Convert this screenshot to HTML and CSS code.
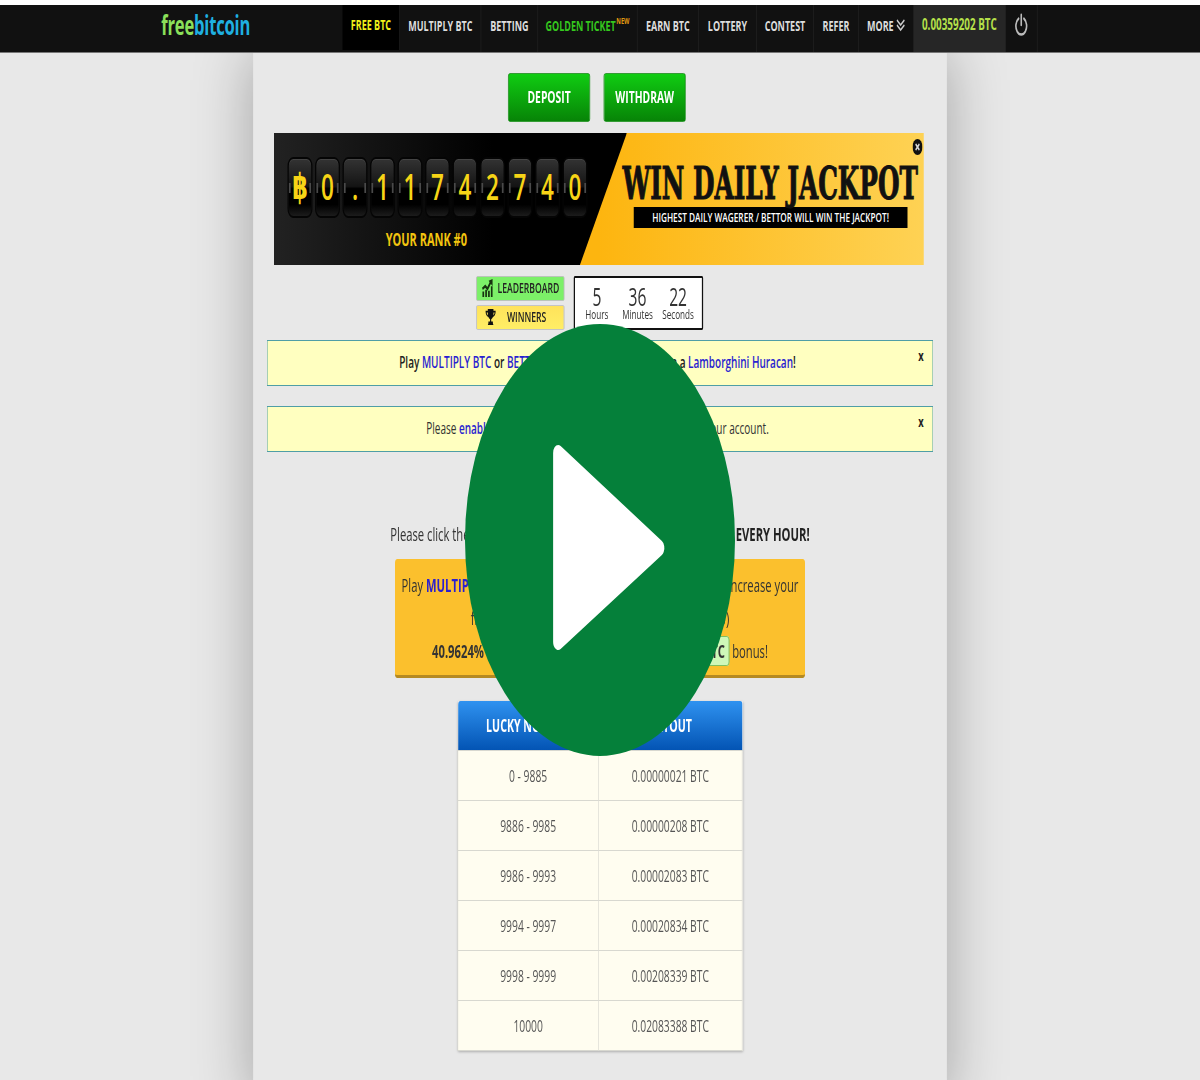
FILE: index.html
```html
<!DOCTYPE html>
<html lang="en">
<head>
<meta charset="UTF-8" />
<title>Free Bitcoin</title>
<link rel="stylesheet" href="styles.css">
</head>
<body>
<div class="frame">
<div class="page">
  <nav class="topbar">
    <a class="logo"><span class="logo-free">free</span><span class="logo-bit">bitcoin</span></a>
    <ul class="menu">
      <li class="menu-item active" style="width:92px">FREE BTC</li>
      <li class="menu-item" style="width:130px">MULTIPLY BTC</li>
      <li class="menu-item" style="width:91px">BETTING</li>
      <li class="menu-item golden" style="width:159px">GOLDEN TICKET<sup class="new">NEW</sup></li>
      <li class="menu-item" style="width:98px">EARN BTC</li>
      <li class="menu-item" style="width:93px">LOTTERY</li>
      <li class="menu-item" style="width:91px">CONTEST</li>
      <li class="menu-item" style="width:72px">REFER</li>
      <li class="menu-item" style="width:88px">MORE
        <svg class="chevrons" viewBox="0 0 14 14"><path d="M1 2l6 5 6-5M1 7l6 5 6-5" fill="none" stroke="#ccc" stroke-width="2"/></svg>
      </li>
      <li class="menu-item balance" style="width:147px">0.00359202 BTC</li>
      <li class="menu-item" style="width:51px">
        <svg class="power" viewBox="0 0 24 28"><path d="M7 6.500a10 10 0 1 0 10 0M12 2v12" fill="none" stroke="#bbb" stroke-width="3" stroke-linecap="round"/></svg>
      </li>
    </ul>
  </nav>

  <main class="content">
    <div class="actions">
      <a class="btn-green">DEPOSIT</a>
      <a class="btn-green">WITHDRAW</a>
    </div>

    <section class="jackpot">
      <div class="jackpot-left">
        <div class="flips">
          <span class="flip baht">฿</span><span class="flip">0</span><span class="flip">.</span><span class="flip">1</span><span class="flip">1</span><span class="flip">7</span><span class="flip">4</span><span class="flip">2</span><span class="flip">7</span><span class="flip">4</span><span class="flip">0</span>
        </div>
        <div class="rank">YOUR RANK #0</div>
      </div>
      <div class="jackpot-right">
        <div class="jackpot-title">WIN DAILY JACKPOT</div>
        <div class="jackpot-sub">HIGHEST DAILY WAGERER / BETTOR WILL WIN THE JACKPOT!</div>
      </div>
      <svg class="jackpot-close" viewBox="0 0 16 16"><circle cx="8" cy="8" r="8" fill="#111"/><path d="M5 5l6 6M11 5l-6 6" stroke="#ddd" stroke-width="2"/></svg>
    </section>

    <div class="board">
      <div class="board-links">
        <a class="board-btn green">
          <svg class="board-icon" viewBox="0 0 20 20"><path d="M1 20v-6h3v6zM6 20v-8h3v8zM11 20v-7h3v7zM16 20V8h3v12z" fill="#17330f"/><path d="M1 11l5-3 4 3 6-8" fill="none" stroke="#17330f" stroke-width="3"/><path d="M12 2l7-2v8z" fill="#17330f"/></svg>
          LEADERBOARD
        </a>
        <a class="board-btn yellow">
          <svg class="board-icon" viewBox="0 0 20 20"><path d="M5 1h10v2h4c0 4-2 6-5 7-.6 1-1.500 2-3 2.500V15h3v2l1 2H5l1-2v-2h3v-2.500C7.500 12 6.600 11 6 10 3 9 1 7 1 3h4zM3 5c.3 1.500 1 2.500 2.300 3.200C5.100 7.200 5 6 5 5zm14 0h-2c0 1-.1 2.200-.3 3.200C16 7.500 16.700 6.500 17 5z" fill="#111"/></svg>
          WINNERS
        </a>
      </div>
      <div class="countdown">
        <div class="count"><b>5</b><span>Hours</span></div>
        <div class="count"><b>36</b><span>Minutes</span></div>
        <div class="count"><b>22</b><span>Seconds</span></div>
      </div>
    </div>

    <div class="notice strong">
      Play <a>MULTIPLY BTC</a> or <a>BETTING</a> games for a chance to win a <a>Lamborghini Huracan</a>!
      <span class="notice-x">x</span>
    </div>
    <div class="notice">
      Please <a class="semi">enable two factor authentication</a> for the security of your account.
      <span class="notice-x">x</span>
    </div>

    <p class="intro">Please click the big ROLL! button below to win lots of free bitcoins <b>EVERY HOUR!</b></p>

    <div class="bonus">
      <p>Play <a>MULTIPLY BTC</a> or <a>BETTING</a> to earn reward points and to increase your</p>
      <p>free bitcoin bonus (see the rewards page for info)</p>
      <p><b>40.9624%</b> of your next win is paid as a <span class="pill">0.00000021 BTC</span> bonus!</p>
    </div>

    <table class="payouts">
      <thead>
        <tr><th class="col-lucky">LUCKY NUMBER</th><th>PAYOUT</th></tr>
      </thead>
      <tbody>
        <tr><td>0 - 9885</td><td>0.00000021 BTC</td></tr>
        <tr><td>9886 - 9985</td><td>0.00000208 BTC</td></tr>
        <tr><td>9986 - 9993</td><td>0.00002083 BTC</td></tr>
        <tr><td>9994 - 9997</td><td>0.00020834 BTC</td></tr>
        <tr><td>9998 - 9999</td><td>0.00208339 BTC</td></tr>
        <tr><td>10000</td><td>0.02083388 BTC</td></tr>
      </tbody>
    </table>
  </main>

  <svg class="play" viewBox="0 0 432 432">
    <circle cx="216" cy="216" r="216" fill="#05803a"/>
    <path d="M149 129 L311 224 L149 318 Z" fill="#fff" stroke="#fff" stroke-width="16" stroke-linejoin="round"/>
  </svg>
</div>
</div>
</body>
</html>
```

FILE: styles.css
```css
html, body {
  margin: 0;
  height: 1080px;
  overflow: hidden;
  background: #e8e8e8;
}
.frame {
  width: 1200px;
  height: 1080px;
  overflow: hidden;
}
/* the shot is a 1920 wide page squeezed to 1200 */
.page {
  position: relative;
  width: 1920px;
  height: 1080px;
  transform: scaleX(0.625);
  transform-origin: 0 0;
  font-family: "Open Sans", sans-serif;
  font-size: 16px;
  color: #333;
  overflow: hidden;
}
a { color: #2a1fd0; }

/* Top bar */
.topbar {
  position: relative;
  z-index: 2;
  display: flex;
  align-items: stretch;
  height: 47px;
  border-top: 5px solid #fff;
  border-bottom: 1px solid #777;
  background: #111;
}
.logo {
  display: block;
  width: 290px;
  margin-left: 258px;
  font-size: 26.500px;
  font-weight: 700;
  line-height: 40px;
  letter-spacing: -0.3px;
}
.logo-free { color: #8be05a; }
.logo-bit { color: #1fb0e0; }
.menu {
  display: flex;
  margin: 0;
  padding: 0;
  list-style: none;
}
.menu-item {
  display: flex;
  align-items: center;
  justify-content: center;
  gap: 4px;
  box-sizing: border-box;
  border-right: 1px solid #242424;
  font-size: 14.400px;
  font-weight: 700;
  color: #ddd;
  white-space: nowrap;
  padding-bottom: 7px;
}
.menu-item.active {
  background: #000;
  color: #f2f21a;
  margin-bottom: 2px;
}
.menu-item.golden { color: #35c81e; }
.menu-item.balance {
  background: #262626;
  color: #b5e04a;
  font-size: 15.800px;
  padding-bottom: 9px;
}
.new {
  align-self: flex-start;
  margin: 9px 0 0 -3px;
  font-size: 9px;
  color: #e09a10;
}
.chevrons { width: 14px; height: 14px; }
.power { width: 22px; height: 24px; }

/* Column */
.content {
  width: 1110px;
  height: 1030px;
  margin: 0 auto;
  padding-top: 20px;
  background: #e8e8e8;
  box-shadow: 0 0 70px rgba(0, 0, 0, 0.3);
}
.actions {
  display: flex;
  justify-content: center;
  gap: 22px;
  padding-right: 10px;
}
.btn-green {
  width: 129px;
  height: 47px;
  border: 1px solid #0a8a0a;
  border-radius: 3px;
  background: linear-gradient(#10cc12, #078407);
  color: #fff;
  font-size: 16.500px;
  font-weight: 700;
  line-height: 45px;
  text-align: center;
}

/* Jackpot banner */
.jackpot {
  position: relative;
  display: flex;
  width: 1040px;
  height: 132px;
  margin: 11px 0 0 33px;
  background: linear-gradient(90deg, #fdb50f 50%, #fed254 100%);
}
.jackpot-left {
  flex: none;
  width: 565px;
  padding: 24px 0 0 22px;
  box-sizing: border-box;
  background: linear-gradient(90deg, #222, #000 62%);
  clip-path: polygon(0 0, 100% 0, 86.700% 100%, 0 100%);
}
.flips {
  display: flex;
  gap: 4px;
}
/* notches at mid height, then the card face */
.flip {
  flex: none;
  width: 40px;
  height: 61px;
  box-sizing: border-box;
  border: 2px solid #050505;
  border-radius: 9px;
  background:
    linear-gradient(#4a4a4a, #4a4a4a) left center / 3px 10px no-repeat,
    linear-gradient(#4a4a4a, #4a4a4a) right center / 3px 10px no-repeat,
    linear-gradient(#333, #141414 48%, #000 52%, #000 80%, #1c1c1c);
  box-shadow: inset 0 1px 0 #444;
  color: #f7d416;
  font-size: 36px;
  font-weight: 600;
  line-height: 55px;
  text-align: center;
}
.flip.baht { font-family: "DejaVu Sans", sans-serif; font-weight: 700; }
.rank {
  margin: 9px 0 0 0;
  padding-left: 157px;
  color: #f2c40f;
  font-size: 17.600px;
  font-weight: 700;
  line-height: 24px;
}
.jackpot-right {
  flex: 1;
  min-width: 0;
  margin-left: -7px;
  padding-top: 28px;
}
.jackpot-title {
  color: #111;
  font-family: "DejaVu Serif", serif;
  font-stretch: condensed;
  font-size: 44px;
  font-weight: 700;
  line-height: 46px;
  white-space: nowrap;
  -webkit-text-stroke: 1px #111;
}
.jackpot-sub {
  width: 438px;
  margin: 0 0 0 18px;
  background: #000;
  color: #fff;
  font-size: 13.200px;
  font-weight: 600;
  line-height: 21px;
  text-align: center;
  white-space: nowrap;
}
.jackpot-close {
  position: absolute;
  top: 6px;
  right: 2px;
  width: 16px;
  height: 16px;
}

/* Leaderboard + countdown */
.board {
  display: flex;
  justify-content: center;
  gap: 15px;
  margin-top: 11px;
  padding-right: 33px;
}
.board-links {
  display: flex;
  flex-direction: column;
  gap: 4px;
}
.board-btn {
  display: flex;
  align-items: center;
  justify-content: center;
  gap: 6px;
  width: 141px;
  height: 25px;
  padding-bottom: 2px;
  box-sizing: border-box;
  border: 1px solid #bbb;
  border-radius: 2px;
  color: #222;
  font-size: 13.800px;
  font-weight: 600;
}
.board-btn.green { background: #7cf068; }
.board-btn.yellow {
  gap: 16px;
  padding-right: 16px;
  background: linear-gradient(#ffe25a, #ffee66);
}
.board-icon { width: 20px; height: 18px; }
.countdown {
  display: flex;
  justify-content: center;
  gap: 11px;
  width: 207px;
  height: 54px;
  padding-right: 3px;
  box-sizing: border-box;
  border: 2px solid #111;
  border-radius: 2px;
  background: #fff;
}
.count {
  display: flex;
  flex-direction: column;
  align-items: center;
  width: 54px;
}
.count b {
  padding-top: 5px;
  font-size: 25px;
  font-weight: 400;
  line-height: 26px;
}
.count span {
  margin-top: -2px;
  font-size: 13px;
  line-height: 14px;
}

/* Notices */
.notice {
  position: relative;
  width: 1066px;
  height: 46px;
  margin: 10px auto 20px;
  padding-right: 8px;
  box-sizing: border-box;
  border: 1px solid #4f9ea6;
  background: #ffffc0;
  font-size: 16px;
  line-height: 43px;
  text-align: center;
}
.notice.strong { font-weight: 600; color: #222; }
.notice + .notice { margin-top: 0; }
.notice .semi { font-weight: 600; }
.notice-x {
  position: absolute;
  top: 2px;
  right: 14px;
  color: #222;
  font-size: 15px;
  font-weight: 700;
  line-height: 24px;
}

/* Roll text and bonus */
.intro {
  margin: 70px 0 0;
  font-size: 18px;
  line-height: 24px;
  text-align: center;
}
.intro b { color: #222; }
.bonus {
  width: 656px;
  height: 119px;
  margin: 13px auto 0;
  padding-top: 10px;
  box-sizing: border-box;
  border-bottom: 3px solid #b58a22;
  border-radius: 4px;
  background: #fbc02d;
  text-align: center;
  font-size: 18px;
  line-height: 33px;
}
.bonus p { margin: 0; white-space: nowrap; }
.bonus a { font-weight: 700; }
.pill {
  padding: 2px 6px;
  border: 1px solid #6fb04a;
  border-radius: 4px;
  background: #cff8b8;
  font-weight: 700;
}

/* Payout table */
.payouts {
  width: 456px;
  margin: 23px auto 0;
  border-collapse: collapse;
  table-layout: fixed;
  box-shadow: 0 1px 3px rgba(0, 0, 0, 0.25);
}
.payouts th {
  height: 49px;
  padding: 0;
  background: linear-gradient(#2f92f0, #0354b4);
  color: #fff;
  font-size: 17px;
  font-weight: 700;
}
.payouts th.col-lucky { width: 225px; }
.payouts th:first-child { border-top-left-radius: 4px; }
.payouts th:last-child { border-top-right-radius: 4px; }
.payouts td {
  height: 49px;
  padding: 0;
  border: 1px solid #d8d8d0;
  background: #fffdf0;
  color: #555;
  font-size: 16.500px;
  text-align: center;
}

/* Video play button over the page */
.play {
  position: absolute;
  z-index: 3;
  top: 324px;
  left: 744px;
  width: 432px;
  height: 432px;
}
```
